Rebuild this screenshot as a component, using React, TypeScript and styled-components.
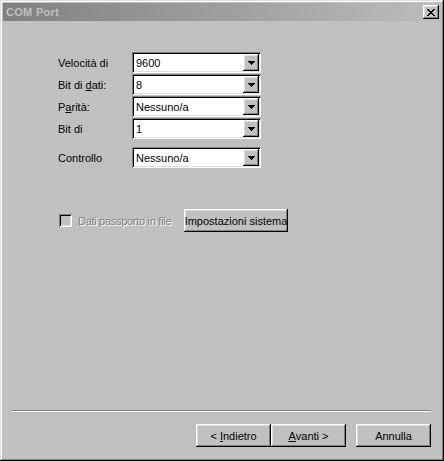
import styled, { createGlobalStyle } from "styled-components";

const GlobalStyle = createGlobalStyle`
  html, body {
    margin: 0;
    padding: 0;
    background: #c0c0c0;
  }
  body {
    font-family: "Liberation Sans", Arial, sans-serif;
    font-size: 11px;
    color: #000;
  }
`;

const raised = `
  box-shadow: inset -1px -1px #000, inset 1px 1px #fff,
    inset -2px -2px #808080, inset 2px 2px #dfdfdf;
`;

const sunken = `
  box-shadow: inset 1px 1px #808080, inset -1px -1px #fff,
    inset 2px 2px #000, inset -2px -2px #dfdfdf;
`;

const Window = styled.div`
  box-sizing: border-box;
  width: 444px;
  height: 461px;
  padding: 3px;
  background: #c0c0c0;
  display: flex;
  flex-direction: column;
  box-shadow: inset -1px -1px #000, inset 1px 1px #dfdfdf,
    inset -2px -2px #808080, inset 2px 2px #fff;
`;

const TitleBar = styled.div`
  height: 18px;
  display: flex;
  align-items: center;
  justify-content: space-between;
  padding: 0 2px 0 3px;
  background: linear-gradient(to right, #808080, #bcbcbc);
`;

const Title = styled.span`
  font-weight: bold;
  font-size: 11px;
  letter-spacing: 0.3px;
  color: #c0c0c0;
`;

const CloseBtn = styled.div`
  width: 16px;
  height: 14px;
  background: #c0c0c0;
  display: flex;
  align-items: center;
  justify-content: center;
  ${raised}
`;

const Body = styled.div`
  flex: 1;
  display: flex;
  flex-direction: column;
  padding: 31px 10px 11px 9px;
`;

const Form = styled.div`
  display: flex;
  flex-direction: column;
  gap: 1px;
  padding-left: 46px;
`;

const Row = styled.div<{ $gap?: number }>`
  display: flex;
  align-items: center;
  height: 21px;
  margin-top: ${({ $gap }) => $gap ?? 0}px;
`;

const Label = styled.span`
  width: 74px;
`;

const Combo = styled.div`
  box-sizing: border-box;
  width: 129px;
  height: 21px;
  padding: 2px;
  background: #fff;
  display: flex;
  align-items: stretch;
  ${sunken}
`;

const ComboValue = styled.span`
  flex: 1;
  padding-left: 2px;
  display: flex;
  align-items: center;
`;

const DropBtn = styled.div`
  width: 16px;
  background: #c0c0c0;
  display: flex;
  align-items: center;
  justify-content: center;
  ${raised}
`;

const OptionsRow = styled.div`
  display: flex;
  align-items: center;
  margin-top: 41px;
  padding-left: 47px;
`;

const CheckLabel = styled.label`
  width: 125px;
  display: flex;
  align-items: center;
`;

const CheckBox = styled.span`
  box-sizing: border-box;
  width: 13px;
  height: 13px;
  background: #c0c0c0;
  ${sunken}
`;

const DisabledText = styled.span`
  margin-left: 6px;
  color: #808080;
  text-shadow: 1px 1px #fff;
  letter-spacing: -0.3px;
`;

const Button = styled.div<{ $w: number; $h?: number }>`
  box-sizing: border-box;
  width: ${({ $w }) => $w}px;
  height: ${({ $h }) => $h ?? 23}px;
  background: #c0c0c0;
  display: flex;
  align-items: center;
  justify-content: center;
  white-space: nowrap;
  ${raised}
`;

const Spacer = styled.div`
  flex: 1;
`;

const Separator = styled.div`
  height: 0;
  border-top: 1px solid #808080;
  border-bottom: 1px solid #fff;
`;

const ButtonBar = styled.div`
  display: flex;
  justify-content: flex-end;
  margin-top: 12px;
`;

const CancelButton = styled(Button)`
  margin-left: 10px;
`;

const U = styled.span`
  text-decoration: underline;
`;

function Arrow() {
  return (
    <svg width="7" height="4" viewBox="0 0 7 4">
      <path d="M0 0h7v1H0zM1 1h5v1H1zM2 2h3v1H2zM3 3h1v1H3z" fill="#000" />
    </svg>
  );
}

function CloseX() {
  return (
    <svg width="8" height="7" viewBox="0 0 8 7">
      <path
        d="M0 0h2v1H0zM6 0h2v1H6zM1 1h2v1H1zM5 1h2v1H5zM2 2h4v1H2zM3 3h2v1H3zM2 4h4v1H2zM1 5h2v1H1zM5 5h2v1H5zM0 6h2v1H0zM6 6h2v1H6z"
        fill="#000"
      />
    </svg>
  );
}

const fields: { label: React.ReactNode; value: string; gap?: number }[] = [
  { label: "Velocità di", value: "9600" },
  { label: <>Bit di <U>d</U>ati:</>, value: "8" },
  { label: <>P<U>a</U>rità:</>, value: "Nessuno/a" },
  { label: "Bit di", value: "1" },
  { label: "Controllo", value: "Nessuno/a", gap: 7 },
];

export default function App() {
  return (
    <>
      <GlobalStyle />
      <Window>
        <TitleBar>
          <Title>COM Port</Title>
          <CloseBtn>
            <CloseX />
          </CloseBtn>
        </TitleBar>
        <Body>
          <Form>
            {fields.map((f, i) => (
              <Row key={i} $gap={f.gap}>
                <Label>{f.label}</Label>
                <Combo>
                  <ComboValue>{f.value}</ComboValue>
                  <DropBtn>
                    <Arrow />
                  </DropBtn>
                </Combo>
              </Row>
            ))}
          </Form>
          <OptionsRow>
            <CheckLabel>
              <CheckBox />
              <DisabledText>Dati passporto in file</DisabledText>
            </CheckLabel>
            <Button $w={104}>Impostazioni sistema</Button>
          </OptionsRow>
          <Spacer />
          <Separator />
          <ButtonBar>
            <Button $w={75}>
              &lt;&nbsp;<U>I</U>ndietro
            </Button>
            <Button $w={75}>
              <U>A</U>vanti &gt;
            </Button>
            <CancelButton $w={75}>Annulla</CancelButton>
          </ButtonBar>
        </Body>
      </Window>
    </>
  );
}
